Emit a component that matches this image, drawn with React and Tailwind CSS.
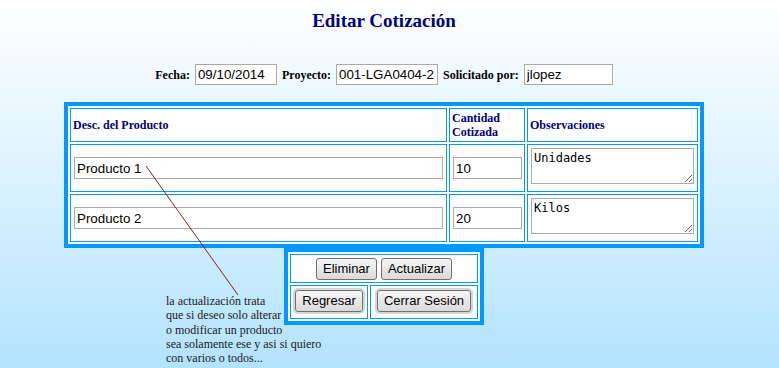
import React from 'react';

const serif = { fontFamily: '"Liberation Serif", "Times New Roman", serif' };
const sans = { fontFamily: '"Liberation Sans", Arial, sans-serif' };
const mono = { fontFamily: '"DejaVu Sans Mono", "Liberation Mono", monospace' };

const Btn = ({ children, halo }) => (
  <button
    style={sans}
    className={`h-[22px] px-[6px] text-[13px] leading-none text-black border border-[#707070] rounded-[3px] bg-gradient-to-b from-[#f6f6f6] to-[#dadada] ${halo ? 'shadow-[0_0_0_2px_#d6d6d6]' : ''}`}
  >
    {children}
  </button>
);

const Field = ({ value, className = '' }) => (
  <input
    readOnly
    value={value}
    style={sans}
    className={`h-[21px] border border-[#a9a9a9] bg-white px-[2px] text-[13.33px] font-normal text-black outline-none ${className}`}
  />
);

const products = [
  { desc: 'Producto 1', qty: '10', obs: 'Unidades' },
  { desc: 'Producto 2', qty: '20', obs: 'Kilos' },
];

export default function App() {
  return (
    <div className="relative h-[368px] overflow-hidden bg-gradient-to-b from-white to-[#b3e3fd]">
      <div className="w-[768px] flex flex-col items-center">
        <h1 style={serif} className="pt-[10px] text-[19px] leading-[22px] font-bold text-[#000080]">
          Editar Cotización
        </h1>

        {/* Encabezado de la cotizacion */}
        <div style={serif} className="mt-[32px] flex items-center gap-[5px] text-[12px] font-bold text-black">
          <span>Fecha:</span>
          <Field value="09/10/2014" className="w-[82px]" />
          <span>Proyecto:</span>
          <Field value="001-LGA0404-2" className="w-[102px]" />
          <span>Solicitado por:</span>
          <Field value="jlopez" className="w-[89px]" />
        </div>

        {/* Detalle */}
        <div className="mt-[17px] grid grid-cols-[377px_76px_171px] grid-rows-[34px_48px_48px] gap-[2px] p-[2px] border-4 border-[#0099ff] bg-white">
          {['Desc. del Producto', 'Cantidad Cotizada', 'Observaciones'].map((h, i) => (
            <div
              key={h}
              style={serif}
              className={`border border-[#0099ff] flex items-center px-[2px] text-[12px] leading-[14px] font-bold text-[#000080] ${i === 1 ? 'pr-[10px]' : ''}`}
            >
              {h}
            </div>
          ))}
          {products.map((p) => (
            <React.Fragment key={p.desc}>
              <div className="border border-[#0099ff] flex items-center px-[3px]">
                <Field value={p.desc} className="w-full h-[22px]" />
              </div>
              <div className="border border-[#0099ff] flex items-center px-[3px]">
                <Field value={p.qty} className="w-[69px] h-[22px]" />
              </div>
              <div className="border border-[#0099ff] px-[3px] pt-[3px]">
                <textarea
                  readOnly
                  value={p.obs}
                  style={mono}
                  className="block w-full h-[36px] border border-[#a9a9a9] bg-white p-[2px] text-[12px] leading-[14px] text-black outline-none"
                />
              </div>
            </React.Fragment>
          ))}
        </div>

        {/* Acciones */}
        <div className="grid grid-cols-[78px_108px] grid-rows-[29px_34px] gap-[2px] p-[2px] border-4 border-[#0099ff] bg-white">
          <div className="col-span-2 border border-[#0099ff] flex items-center justify-center gap-[4px]">
            <Btn>Eliminar</Btn>
            <Btn>Actualizar</Btn>
          </div>
          <div className="border border-[#0099ff] flex items-center justify-center pb-[3px]">
            <Btn halo>Regresar</Btn>
          </div>
          <div className="border border-[#0099ff] flex items-center justify-center pb-[3px]">
            <Btn halo>Cerrar Sesión</Btn>
          </div>
        </div>
      </div>

      {/* nota sobre la pantalla */}
      <svg className="absolute inset-0 pointer-events-none" width="779" height="368">
        <line x1="146" y1="166" x2="238" y2="295" stroke="#8b1c1c" strokeWidth="1" />
      </svg>
      <div style={serif} className="absolute left-[166px] top-[294px] text-[12px] leading-[14.3px] text-[#1a1a1a]">
        <p>la actualización trata</p>
        <p>que si deseo solo alterar</p>
        <p>o modificar un producto</p>
        <p>sea solamente ese y asi si quiero</p>
        <p>con varios o todos...</p>
      </div>
    </div>
  );
}
